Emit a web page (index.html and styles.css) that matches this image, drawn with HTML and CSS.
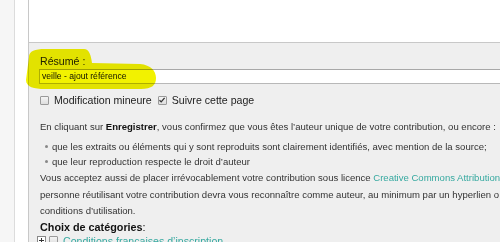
FILE: index.html
```html
<!DOCTYPE html>
<html lang="fr">
<head>
	<meta charset="UTF-8">
	<title>Modifier la page</title>
	<link rel="stylesheet" href="styles.css">
</head>
<body>
	<div class="page">
		<div class="rail"></div>
		<div class="content">
			<div class="editbox">
				<div class="textarea"></div>
				<div class="options">
					<div class="summary_label">Résumé :</div>
					<div class="summary_input">veille - ajout référence</div>
					<div class="checks">
						<span class="cb"></span>
						<span class="check_text">Modification mineure</span>
						<span class="cb checked">
							<svg width="8" height="8" viewBox="0 0 8 8"><path d="M1.5 4.2 L3.2 5.9 L6.6 1.8" fill="none" stroke="#333" stroke-width="1.3"/></svg>
						</span>
						<span class="check_text">Suivre cette page</span>
					</div>
					<p class="notice">En cliquant sur <b>Enregistrer</b>, vous confirmez que vous êtes l’auteur unique de votre contribution, ou encore :</p>
					<ul class="notice_list">
						<li>que les extraits ou éléments qui y sont reproduits sont clairement identifiés, avec mention de la source;</li>
						<li>que leur reproduction respecte le droit d’auteur</li>
					</ul>
					<p class="licence">Vous acceptez aussi de placer irrévocablement votre contribution sous licence <a href="#">Creative Commons Attribution</a><br>personne réutilisant votre contribution devra vous reconnaître comme auteur, au minimum par un hyperlien o<br>conditions d’utilisation.</p>
					<h4 class="cats_title">Choix de catégories<span>:</span></h4>
					<div class="cat_row">
						<span class="expand">
							<svg width="9" height="9" viewBox="0 0 9 9"><rect x="0.5" y="0.5" width="8" height="8" fill="#fff" stroke="#888"/><path d="M2 4.5 H7 M4.5 2 V7" stroke="#333"/></svg>
						</span>
						<span class="cb"></span>
						<a href="#">Conditions françaises d’inscription</a>
					</div>
				</div>
			</div>
		</div>
		<svg class="marker" width="500" height="242" viewBox="0 0 500 242">
			<path d="M29 57 C29 51 35 49 45 49 L84 49 C89 49 91 55 92 63 L140 64 C151 65 156 71 156 78 C156 85 152 89 141 89 L45 89 C34 89 26 87 26 80 Z" fill="#f2f200"/>
		</svg>
	</div>
</body>
</html>
```

FILE: styles.css
```css
body{
	margin:0;
	font-family:"Liberation Sans",Arial,sans-serif;
	color:#222;
}
.page{
	position:relative;
	width:500px;
	height:242px;
	overflow:hidden;
	display:flex;
}
.rail{
	width:14px;
	flex:none;
	background-color:#f6f6f6;
	border-right:1px solid #dcdcdc;
}
.content{
	flex:1;
	background-color:#fff;
	padding-left:13px;
}
.editbox{
	height:100%;
	background-color:#efefef;
	border-left:1px solid #c8c8c8;
}
.textarea{
	height:42px;
	background-color:#fff;
	border-bottom:1px solid #c8c8c8;
}
.options{
	padding:12px 0 0 11px;
	white-space:nowrap;
}
.summary_label{
	font-size:10.6px;
	line-height:13px;
	margin-bottom:1px;
}
.summary_input{
	width:600px;
	height:13px;
	margin-left:-1px;
	padding-left:2px;
	background-color:#fff;
	border:1px solid #b8b8b8;
	border-top-color:#a8a8a8;
	font-size:8.6px;
	line-height:13px;
	color:#111;
}
.checks{
	display:flex;
	align-items:center;
	margin-top:9px;
	height:14px;
	font-size:10.6px;
}
.cb{
	width:7px;
	height:7px;
	flex:none;
	display:inline-flex;
	border:1px solid #9a9a9a;
	border-radius:1px;
	background:linear-gradient(#f4f4f4,#dedede);
}
.cb svg{
	margin:-1px 0 0 -1px;
}
.check_text{
	margin:0 6px 0 5px;
}
.notice{
	margin:12px 0 0 0;
	font-size:9.55px;
	line-height:16px;
	color:#333;
}
.notice b{
	color:#111;
}
.notice_list{
	margin:4px 0 0 0;
	padding:0 0 0 12px;
	list-style:none;
	font-size:9.55px;
	line-height:15px;
	color:#333;
}
.notice_list li{
	position:relative;
}
.notice_list li:before{
	content:"";
	position:absolute;
	left:-7px;
	top:6px;
	width:3px;
	height:3px;
	border-radius:50%;
	background-color:#888;
}
.licence{
	margin:1px 0 0 0;
	font-size:9.55px;
	line-height:16.5px;
	color:#333;
}
a{
	color:#36a9a0;
	text-decoration:none;
}
.cats_title{
	margin:1px 0 0 0;
	font-size:10.8px;
	line-height:13px;
	color:#111;
}
.cats_title span{
	font-weight:normal;
}
.cat_row{
	display:flex;
	align-items:center;
	margin-top:1px;
	margin-left:-3px;
	height:12px;
	font-size:10.6px;
}
.cat_row .cb{
	margin:0 5px 0 3px;
}
.expand{
	display:inline-flex;
}
.marker{
	position:absolute;
	left:0;
	top:0;
	pointer-events:none;
	mix-blend-mode:multiply;
}
```
